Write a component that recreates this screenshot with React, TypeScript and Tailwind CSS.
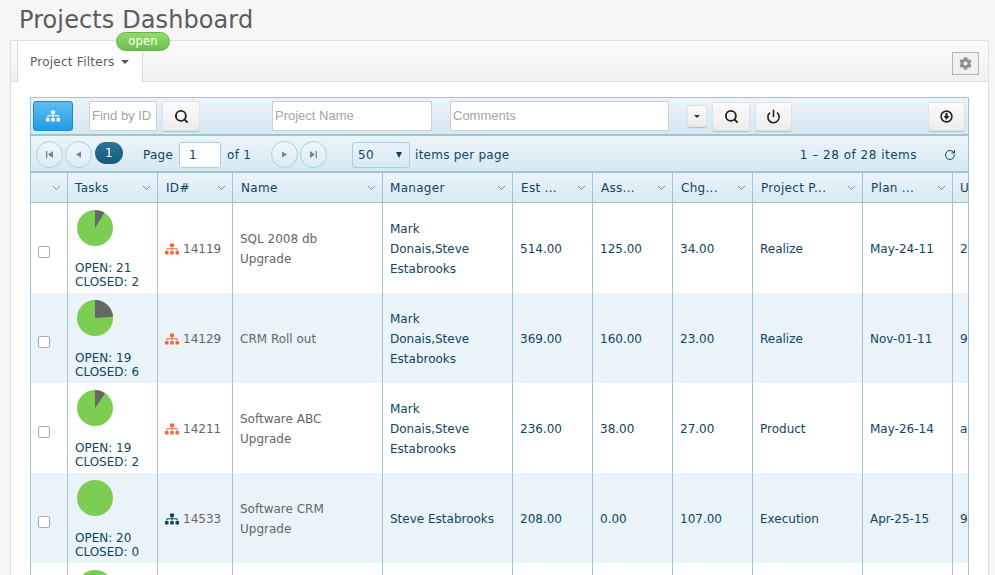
import { FaCog, FaSitemap } from 'react-icons/fa'
import { Power, RotateCw, Search } from 'lucide-react'

interface Project {
  open: number
  closed: number
  id: string
  critical: boolean
  name: string[]
  manager: string[]
  est: string
  ass: string
  chg: string
  phase: string
  plan: string
  extra: string
}

const projects: Project[] = [
  { open: 21, closed: 2, id: '14119', critical: true, name: ['SQL 2008 db', 'Upgrade'], manager: ['Mark', 'Donais,Steve', 'Estabrooks'], est: '514.00', ass: '125.00', chg: '34.00', phase: 'Realize', plan: 'May-24-11', extra: '2' },
  { open: 19, closed: 6, id: '14129', critical: true, name: ['CRM Roll out'], manager: ['Mark', 'Donais,Steve', 'Estabrooks'], est: '369.00', ass: '160.00', chg: '23.00', phase: 'Realize', plan: 'Nov-01-11', extra: '9' },
  { open: 19, closed: 2, id: '14211', critical: true, name: ['Software ABC', 'Upgrade'], manager: ['Mark', 'Donais,Steve', 'Estabrooks'], est: '236.00', ass: '38.00', chg: '27.00', phase: 'Product', plan: 'May-26-14', extra: 'a' },
  { open: 20, closed: 0, id: '14533', critical: false, name: ['Software CRM', 'Upgrade'], manager: ['Steve Estabrooks'], est: '208.00', ass: '0.00', chg: '107.00', phase: 'Execution', plan: 'Apr-25-15', extra: '9' },
]

const headers = [
  { label: '', width: 'w-[37px] pl-[7px]' },
  { label: 'Tasks', width: 'w-[90px] pl-[7px]' },
  { label: 'ID#', width: 'w-[75px] pl-[8px]' },
  { label: 'Name', width: 'w-[150px] pl-[8px]' },
  { label: 'Manager', width: 'w-[130px] pl-[7px]' },
  { label: 'Est ...', width: 'w-[80px] pl-[8px]' },
  { label: 'Ass...', width: 'w-[80px] pl-[8px]' },
  { label: 'Chg...', width: 'w-[80px] pl-[8px]' },
  { label: 'Project P...', width: 'w-[110px] pl-[8px]' },
  { label: 'Plan ...', width: 'w-[90px] pl-[8px]' },
]

function Pie({ open, closed }: { open: number; closed: number }) {
  const share = closed / (open + closed)
  const angle = share * Math.PI * 2
  const x = 18 + 18 * Math.sin(angle)
  const y = 18 - 18 * Math.cos(angle)
  return (
    <svg width="36" height="36" viewBox="0 0 36 36" className="block">
      <circle cx="18" cy="18" r="18" fill="#7ccd52" />
      {closed > 0 && <path d={`M18 18 L18 0 A18 18 0 0 1 ${x} ${y} Z`} fill="#666666" />}
    </svg>
  )
}

function Chevron() {
  return (
    <svg width="9" height="6" viewBox="0 0 9 6" className="shrink-0">
      <path d="M1 1 L4.5 4.5 L8 1" fill="none" stroke="#6f8c9c" strokeWidth="1" />
    </svg>
  )
}

function GrayButton({ className, children }: { className: string; children: React.ReactNode }) {
  return (
    <button className={`flex items-center justify-center rounded-[3px] border border-[#dfe3e5] bg-gradient-to-b from-[#fbfbfb] to-[#ececec] shadow-[0_1px_1px_rgba(0,0,0,0.18)] text-[#222] ${className}`}>
      {children}
    </button>
  )
}

function PagerButton({ points, bar, flip }: { points: string; bar?: boolean; flip?: boolean }) {
  return (
    <button className="flex h-[27px] w-[27px] items-center justify-center rounded-full border border-[#a9cede] bg-gradient-to-b from-[#f0f7fb] to-[#dcebf3]">
      <svg width="9" height="9" viewBox="0 0 9 9" className={flip ? 'rotate-180' : ''}>
        {bar && <rect x="1" y="1" width="1.3" height="7" fill="#6b8796" />}
        <polygon points={points} fill="#6b8796" />
      </svg>
    </button>
  )
}

export default function App() {
  return (
    <div className="h-[575px] w-[995px] overflow-hidden bg-[#f6f6f6] font-['DejaVu_Sans',sans-serif] text-[12px] text-[#0f4561]">
      <h1 className="h-[40px] pl-[19px] pt-[3px] text-[24px] leading-[34px] tracking-[0.1px] text-[#5c5c5c]">Projects Dashboard</h1>

      <div className="ml-[10px] w-[979px] rounded-t-[2px] border border-[#dedede] bg-white">
        {/* Tab strip */}
        <div className="relative flex h-[41px] items-end justify-between border-b border-[#dcdcdc] bg-gradient-to-b from-[#fbfbfb] to-[#f0f0f0] pl-[6px] pr-[9px]">
          <div className="relative -mb-px flex h-[41px] w-[126px] items-center gap-[6px] border-x border-[#dcdcdc] bg-white pl-[12px] text-[12px] tracking-[0.25px] text-[#5c5c5c]">
            <span className="whitespace-nowrap">Project Filters</span>
            <span className="h-0 w-0 border-x-[4px] border-t-[4px] border-x-transparent border-t-[#555]" />
            <span className="absolute left-[98px] top-[-9px] flex h-[19px] w-[54px] items-center justify-center rounded-full border border-[#6bb24a] bg-gradient-to-b from-[#92db6c] to-[#6cc04a] text-[11.5px] leading-none text-white">
              open
            </span>
          </div>
          <button className="mb-[6px] flex h-[23px] w-[27px] items-center justify-center border border-[#b4b4b4] bg-[#f1f1f1] text-[#8f8f8f]">
            <FaCog size={13} />
          </button>
        </div>

        {/* Grid */}
        <div className="ml-[19px] mt-[15px] h-[600px] w-[939px] overflow-hidden border-x border-t border-[#9cc5d8]">
          <div className="flex h-[36px] items-center bg-gradient-to-b from-[#ebf4f9] to-[#d6e8f1] pl-[2px]">
            <button className="flex h-[30px] w-[40px] items-center justify-center rounded-[3px] border border-[#2288cc] bg-gradient-to-b from-[#5cbcf1] to-[#1d9ce6] text-white">
              <FaSitemap size={14} />
            </button>
            <input placeholder="Find by ID" className="ml-[16px] h-[30px] w-[68px] border border-[#cfcfcf] bg-white pb-[2px] pl-[2px] font-['Liberation_Sans',sans-serif] text-[13px] placeholder:text-[#a5a5a5]" />
            <GrayButton className="ml-[5px] h-[30px] w-[38px]">
              <Search size={15} strokeWidth={3} />
            </GrayButton>
            <input placeholder="Project Name" className="ml-[72px] h-[30px] w-[160px] border border-[#cfcfcf] bg-white pb-[2px] pl-[2px] font-['Liberation_Sans',sans-serif] text-[13px] placeholder:text-[#a5a5a5]" />
            <input placeholder="Comments" className="ml-[18px] h-[30px] w-[219px] border border-[#cfcfcf] bg-white pb-[2px] pl-[2px] font-['Liberation_Sans',sans-serif] text-[13px] placeholder:text-[#a5a5a5]" />
            <GrayButton className="ml-[18px] h-[22px] w-[20px]">
              <span className="h-0 w-0 border-x-[3px] border-t-[3px] border-x-transparent border-t-[#333]" />
            </GrayButton>
            <GrayButton className="ml-[5px] h-[29px] w-[38px]">
              <Search size={15} strokeWidth={3} />
            </GrayButton>
            <GrayButton className="ml-[5px] h-[29px] w-[37px]">
              <Power size={15} strokeWidth={2.5} />
            </GrayButton>
            <GrayButton className="ml-[136px] h-[29px] w-[37px]">
              <svg width="13" height="13" viewBox="0 0 13 13">
                <circle cx="6.5" cy="6.5" r="5.4" fill="none" stroke="#222" strokeWidth="1.6" />
                <path d="M5.4 3 H7.6 V6 H9.5 L6.5 9.8 L3.5 6 H5.4 Z" fill="#222" />
              </svg>
            </GrayButton>
          </div>

          <div className="flex h-[39px] items-center border-y-2 border-[#9cc5d8] bg-gradient-to-b from-[#ebf4f9] to-[#d8e9f2] pl-[5px] pt-[2px] tracking-[0.25px]">
            <PagerButton points="8,1 8,8 3,4.5" bar />
            <span className="ml-[2px]">
              <PagerButton points="7,1.5 7,7.5 2,4.5" />
            </span>
            <span className="-mt-[4px] ml-[3px] flex h-[22px] w-[28px] items-center justify-center rounded-full bg-gradient-to-b from-[#2b7397] to-[#155a7d] text-white">1</span>
            <span className="ml-[20px]">Page</span>
            <input defaultValue="1" className="ml-[6px] h-[26px] w-[42px] rounded-[3px] border border-[#a9cede] bg-white pl-[9px] text-[#0f4561]" />
            <span className="ml-[6px]">of 1</span>
            <span className="ml-[20px]">
              <PagerButton points="2,1.5 2,7.5 7,4.5" />
            </span>
            <span className="ml-[2px]">
              <PagerButton points="8,1 8,8 3,4.5" bar flip />
            </span>
            <div className="ml-[25px] flex h-[26px] w-[58px] items-center justify-between rounded-[3px] border border-[#a9cede] pl-[5px] pr-[7px]">
              <span>50</span>
              <span className="h-0 w-0 border-x-[3.5px] border-t-[6px] border-x-transparent border-t-[#0f4561]" />
            </div>
            <span className="ml-[5px]">items per page</span>
            <span className="ml-auto tracking-[0.5px]">1 – 28 of 28 items</span>
            <RotateCw size={12} className="ml-[27px] mr-[12px]" />
          </div>

          {/* Column headers */}
          <div className="flex h-[30px] border-b border-[#9cc5d8] bg-gradient-to-b from-[#ebf4f9] to-[#d8e9f2] tracking-[0.3px]">
            {headers.map((h) => (
              <div key={h.label} className={`flex shrink-0 items-center justify-between border-r border-[#9cc5d8] pr-[6px] ${h.width}`}>
                <span className="whitespace-nowrap">{h.label}</span>
                <Chevron />
              </div>
            ))}
            <div className="flex items-center pl-[7px]">U</div>
          </div>

          {projects.map((p, i) => (
            <div key={p.id} className={`flex h-[90px] ${i % 2 === 1 ? 'bg-[#e9f3f8]' : 'bg-white'}`}>
              <div className="flex w-[37px] shrink-0 items-center border-r border-[#9cc5d8] pl-[7px] pt-[8px]">
                <input type="checkbox" className="h-[12px] w-[12px] appearance-none rounded-[2px] border border-[#aaa] bg-white" />
              </div>
              <div className="w-[90px] shrink-0 border-r border-[#9cc5d8] pl-[9px] pt-[7px]">
                <Pie open={p.open} closed={p.closed} />
                <div className="-ml-[2px] mt-[15px] whitespace-nowrap text-[12px] leading-[14px]">OPEN: {p.open}</div>
                <div className="-ml-[2px] whitespace-nowrap text-[12px] leading-[14px]">CLOSED: {p.closed}</div>
              </div>
              <div className="flex w-[75px] shrink-0 items-center gap-[4px] border-r border-[#9cc5d8] pl-[7px] pt-[2px] text-[#666]">
                <FaSitemap size={14} className={p.critical ? 'text-[#f4663f]' : 'text-[#0f4561]'} />
                <span>{p.id}</span>
              </div>
              <div className="flex w-[150px] shrink-0 flex-col justify-center border-r border-[#9cc5d8] pl-[7px] pt-[2px] leading-[20px] text-[#666]">
                {p.name.map((l) => (
                  <div key={l}>{l}</div>
                ))}
              </div>
              <div className="flex w-[130px] shrink-0 flex-col justify-center border-r border-[#9cc5d8] pl-[7px] pt-[2px] leading-[20px]">
                {p.manager.map((l) => (
                  <div key={l} className="whitespace-nowrap">{l}</div>
                ))}
              </div>
              <div className="flex w-[80px] shrink-0 items-center border-r border-[#9cc5d8] pl-[7px] pt-[2px]">{p.est}</div>
              <div className="flex w-[80px] shrink-0 items-center border-r border-[#9cc5d8] pl-[7px] pt-[2px]">{p.ass}</div>
              <div className="flex w-[80px] shrink-0 items-center border-r border-[#9cc5d8] pl-[7px] pt-[2px]">{p.chg}</div>
              <div className="flex w-[110px] shrink-0 items-center border-r border-[#9cc5d8] pl-[7px] pt-[2px]">{p.phase}</div>
              <div className="flex w-[90px] shrink-0 items-center border-r border-[#9cc5d8] pl-[7px] pt-[2px]">{p.plan}</div>
              <div className="flex items-center pl-[7px] pt-[2px]">{p.extra}</div>
            </div>
          ))}

          {/* Row cut off by the window */}
          <div className="flex h-[90px] bg-white">
            <div className="w-[37px] shrink-0 border-r border-[#9cc5d8]" />
            <div className="w-[90px] shrink-0 border-r border-[#9cc5d8] pl-[9px] pt-[7px]">
              <Pie open={20} closed={0} />
            </div>
            <div className="w-[75px] shrink-0 border-r border-[#9cc5d8]" />
            <div className="w-[150px] shrink-0 border-r border-[#9cc5d8]" />
            <div className="w-[130px] shrink-0 border-r border-[#9cc5d8]" />
            <div className="w-[80px] shrink-0 border-r border-[#9cc5d8]" />
            <div className="w-[80px] shrink-0 border-r border-[#9cc5d8]" />
            <div className="w-[80px] shrink-0 border-r border-[#9cc5d8]" />
            <div className="w-[110px] shrink-0 border-r border-[#9cc5d8]" />
            <div className="w-[90px] shrink-0 border-r border-[#9cc5d8]" />
          </div>
        </div>
      </div>
    </div>
  )
}
